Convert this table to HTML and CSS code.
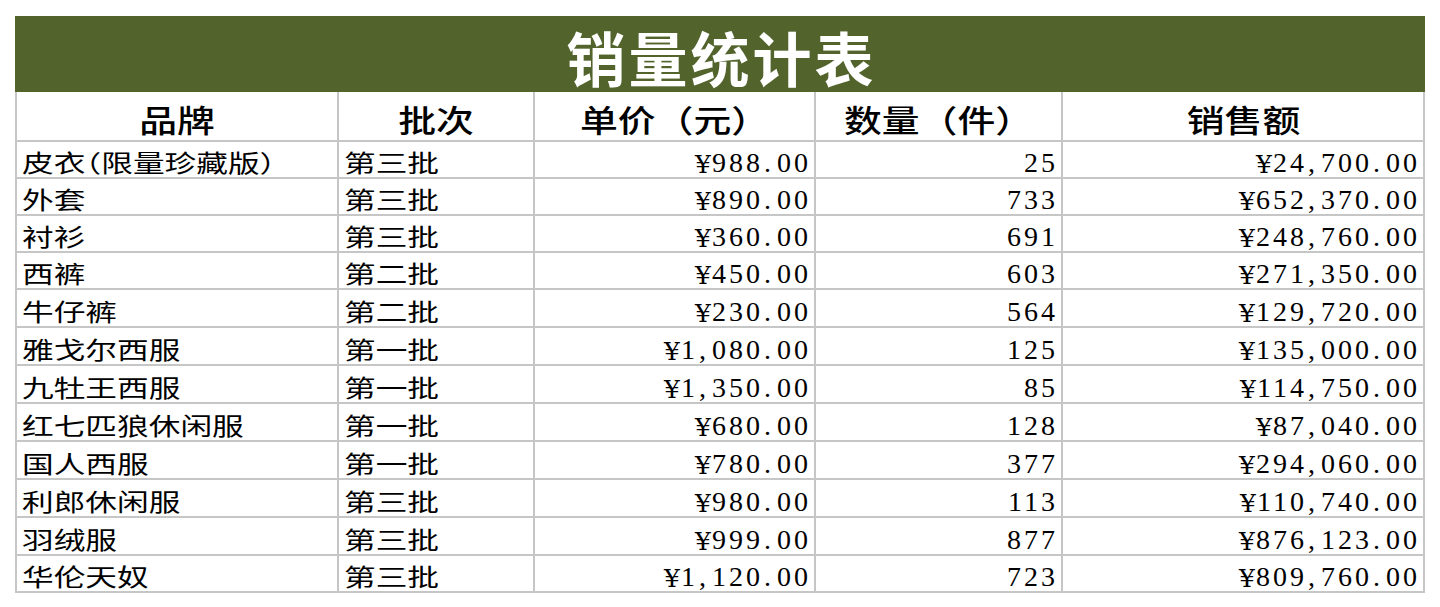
FILE: index.html
```html
<!DOCTYPE html>
<html lang="zh-CN">
<head>
<meta charset="utf-8">
<title>销量统计表</title>
<link rel="stylesheet" href="styles.css">
</head>
<body>
<div class="sheet">
  <div class="title"><span class="title-text">销量统计表</span></div>
  <div class="grid">
    <div class="c h"><span class="hs">品牌</span></div><div class="c h"><span class="hs">批次</span></div><div class="c h"><span class="hs">单价（元）</span></div><div class="c h"><span class="hs">数量（件）</span></div><div class="c h"><span class="hs">销售额</span></div>

    <div class="c t"><span class="s">皮衣（限量珍藏版）</span></div><div class="c t"><span class="s">第三批</span></div><div class="c n"><span class="y">¥</span>988<span class="p">.</span>00</div><div class="c n">25</div><div class="c n"><span class="y">¥</span>24<span class="p">,</span>700<span class="p">.</span>00</div>
    <div class="c t"><span class="s">外套</span></div><div class="c t"><span class="s">第三批</span></div><div class="c n"><span class="y">¥</span>890<span class="p">.</span>00</div><div class="c n">733</div><div class="c n"><span class="y">¥</span>652<span class="p">,</span>370<span class="p">.</span>00</div>
    <div class="c t"><span class="s">衬衫</span></div><div class="c t"><span class="s">第三批</span></div><div class="c n"><span class="y">¥</span>360<span class="p">.</span>00</div><div class="c n">691</div><div class="c n"><span class="y">¥</span>248<span class="p">,</span>760<span class="p">.</span>00</div>
    <div class="c t"><span class="s">西裤</span></div><div class="c t"><span class="s">第二批</span></div><div class="c n"><span class="y">¥</span>450<span class="p">.</span>00</div><div class="c n">603</div><div class="c n"><span class="y">¥</span>271<span class="p">,</span>350<span class="p">.</span>00</div>
    <div class="c t"><span class="s">牛仔裤</span></div><div class="c t"><span class="s">第二批</span></div><div class="c n"><span class="y">¥</span>230<span class="p">.</span>00</div><div class="c n">564</div><div class="c n"><span class="y">¥</span>129<span class="p">,</span>720<span class="p">.</span>00</div>
    <div class="c t"><span class="s">雅戈尔西服</span></div><div class="c t"><span class="s">第一批</span></div><div class="c n"><span class="y">¥</span>1<span class="p">,</span>080<span class="p">.</span>00</div><div class="c n">125</div><div class="c n"><span class="y">¥</span>135<span class="p">,</span>000<span class="p">.</span>00</div>
    <div class="c t"><span class="s">九牡王西服</span></div><div class="c t"><span class="s">第一批</span></div><div class="c n"><span class="y">¥</span>1<span class="p">,</span>350<span class="p">.</span>00</div><div class="c n">85</div><div class="c n"><span class="y">¥</span>114<span class="p">,</span>750<span class="p">.</span>00</div>
    <div class="c t"><span class="s">红七匹狼休闲服</span></div><div class="c t"><span class="s">第一批</span></div><div class="c n"><span class="y">¥</span>680<span class="p">.</span>00</div><div class="c n">128</div><div class="c n"><span class="y">¥</span>87<span class="p">,</span>040<span class="p">.</span>00</div>
    <div class="c t"><span class="s">国人西服</span></div><div class="c t"><span class="s">第一批</span></div><div class="c n"><span class="y">¥</span>780<span class="p">.</span>00</div><div class="c n">377</div><div class="c n"><span class="y">¥</span>294<span class="p">,</span>060<span class="p">.</span>00</div>
    <div class="c t"><span class="s">利郎休闲服</span></div><div class="c t"><span class="s">第三批</span></div><div class="c n"><span class="y">¥</span>980<span class="p">.</span>00</div><div class="c n">113</div><div class="c n"><span class="y">¥</span>110<span class="p">,</span>740<span class="p">.</span>00</div>
    <div class="c t"><span class="s">羽绒服</span></div><div class="c t"><span class="s">第三批</span></div><div class="c n"><span class="y">¥</span>999<span class="p">.</span>00</div><div class="c n">877</div><div class="c n"><span class="y">¥</span>876<span class="p">,</span>123<span class="p">.</span>00</div>
    <div class="c t"><span class="s">华伦天奴</span></div><div class="c t"><span class="s">第三批</span></div><div class="c n"><span class="y">¥</span>1<span class="p">,</span>120<span class="p">.</span>00</div><div class="c n">723</div><div class="c n"><span class="y">¥</span>809<span class="p">,</span>760<span class="p">.</span>00</div>
  </div>
</div>
</body>
</html>
```
FILE: styles.css
```css
html, body {
  margin: 0;
  padding: 0;
  background: #ffffff;
}

.sheet {
  margin: 16px 0 0 15px;
  width: 1410px;
}

.title {
  height: 76px;
  background: #52632b;
  display: flex;
  align-items: flex-end;
  justify-content: center;
  box-sizing: border-box;
  padding-bottom: 6px;
}

.title-text {
  font-family: "Noto Sans CJK SC", sans-serif;
  font-weight: 700;
  font-size: 59px;
  line-height: 1;
  letter-spacing: 3px;
  margin-right: -3px;
  color: #ffffff;
}

.grid {
  display: grid;
  grid-template-columns: 320px 194px 279px 245px 360px;
  grid-template-rows: 48px 35px 35px 35px 35px 36px 36px 36px 36px 36px 36px 36px 35px;
  gap: 2px;
  padding: 0 2px 2px 2px;
  background: #c6c6c6;
}

.c {
  background: #ffffff;
  display: flex;
  box-sizing: border-box;
  color: #000000;
  white-space: nowrap;
}

.h {
  font-family: "Noto Sans CJK SC", sans-serif;
  font-weight: 500;
  font-size: 31px;
  line-height: 1;
  justify-content: center;
  align-items: center;
  padding-top: 5px;
}

.hs {
  display: inline-block;
  transform: scaleX(1.22);
  transform-origin: center;
}

.t {
  font-family: "Noto Sans CJK SC", sans-serif;
  font-weight: 400;
  font-size: 24px;
  line-height: 1;
  font-feature-settings: "halt" 1;
  align-items: flex-end;
  padding: 0 0 3px 5px;
}

.s {
  display: inline-block;
  transform: scaleX(1.32);
  transform-origin: left center;
}

.n {
  font-family: "Liberation Serif", serif;
  font-size: 28px;
  line-height: 1;
  letter-spacing: 3px;
  justify-content: flex-end;
  align-items: flex-end;
  padding: 0 3px 0 0;
}

.y {
  display: inline-block;
  width: 17px;
  letter-spacing: 0;
  font-family: "DejaVu Serif", serif;
  font-size: 25px;
  text-align: left;
}

.p {
  display: inline-block;
  width: 14px;
  text-align: left;
  padding-left: 1px;
  box-sizing: border-box;
}
```
